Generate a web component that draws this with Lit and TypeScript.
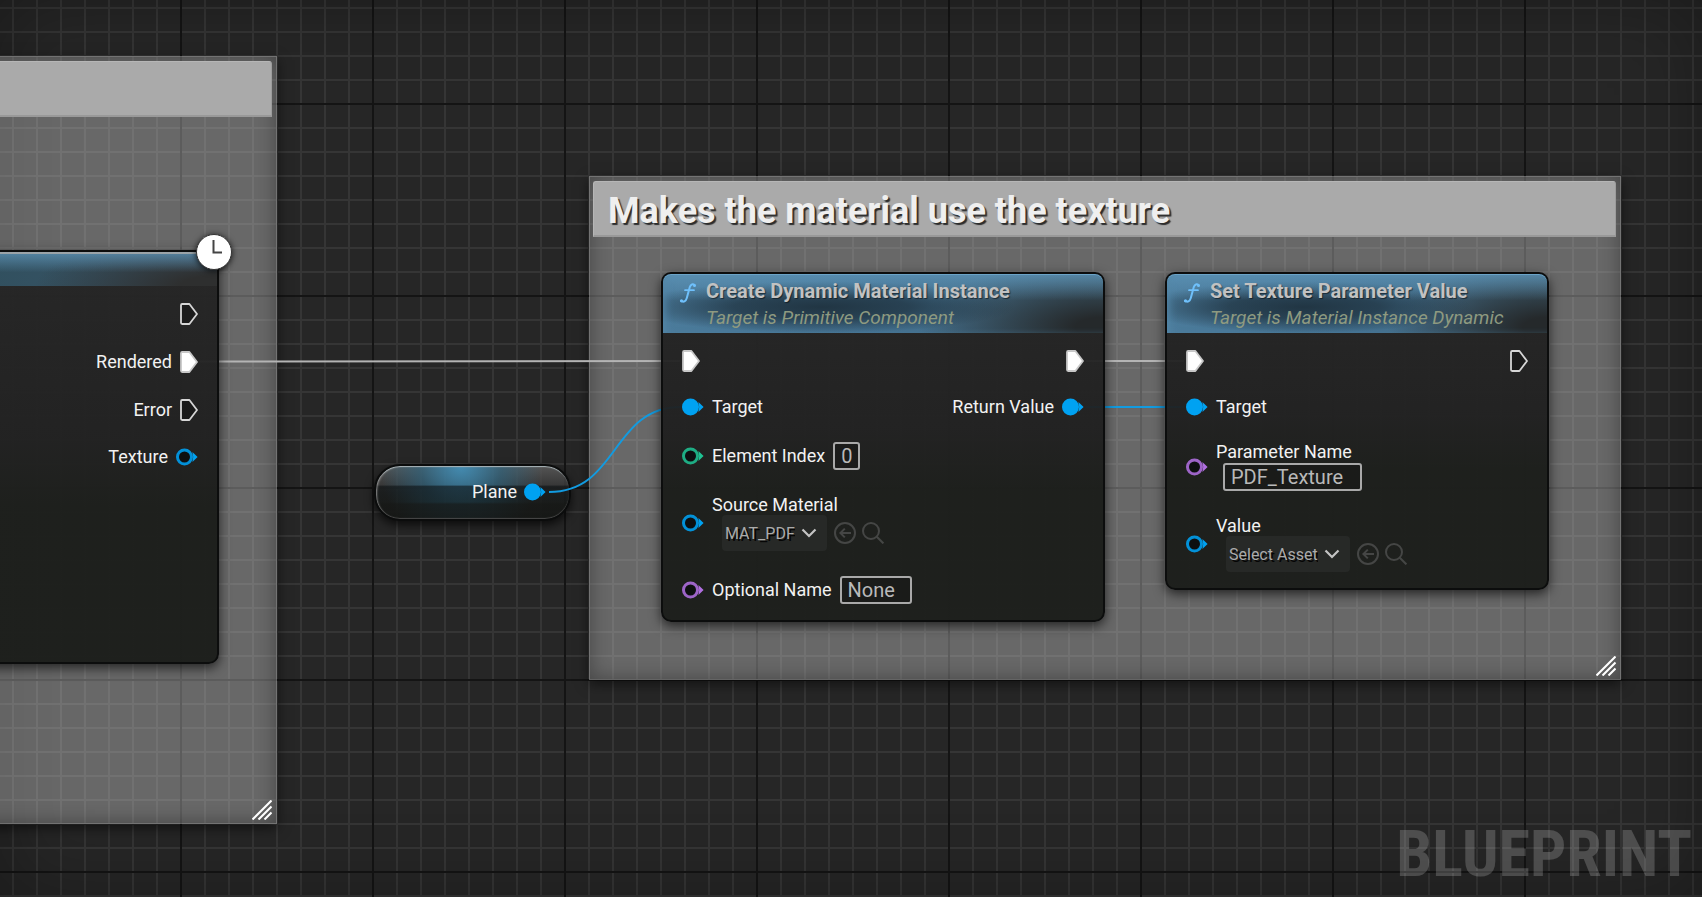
import { LitElement, html, css, svg } from "lit";
import { customElement, property } from "lit/decorators.js";

const BLUE = "#00a2f2";
const GREEN = "#1fc293";
const PURPLE = "#b06fe0";

const execPin = (filled: boolean) => html`<svg class="pin" width="18" height="22" viewBox="0 0 18 22" aria-hidden="true">
  <path d="M1 2.2Q1 1 2.2 1H9.4L17 11L9.4 21H2.2Q1 21 1 19.8Z" fill=${filled ? "#fff" : "rgba(10,10,10,.35)"}
    stroke=${filled ? "#c8c8c8" : "#d6d6d6"} stroke-width="1.8" stroke-linejoin="round"/>
</svg>`;

const dataPin = (color: string, filled = false) => html`<svg class="pin" width="22" height="18" viewBox="0 0 22 18" aria-hidden="true">
  <path d="M16.4 4Q18 9 16.4 14L21.6 9Z" fill=${color}/>
  <circle cx="8.5" cy="9" r="7" fill=${filled ? color : "#0d0f10"} stroke=${color} stroke-width="3" stroke-opacity=${filled ? 1 : 0.88}/>
</svg>`;

const chevron = html`<svg class="chevron" width="16" height="10" viewBox="0 0 16 10" aria-hidden="true">
  <path d="M1.5 1.5L8 8L14.5 1.5" fill="none" stroke="#c4c4c4" stroke-width="2.2"/>
</svg>`;

const grip = html`<svg class="grip" width="20" height="20" viewBox="0 0 20 20" aria-hidden="true">
  <path d="M0.5 19.5L19.5 0.5M6.5 19.5L19.5 6.5M12.5 19.5L19.5 12.5" stroke="#fff" stroke-width="2.1"/>
</svg>`;

const fnIcon = html`<svg class="fn" width="18" height="22" viewBox="0 0 18 22" aria-hidden="true">
  <g fill="none" stroke="#6fc0fb" stroke-width="2" stroke-linecap="round">
    <path d="M15.6 3.2C14 1.6 11.6 2.2 10.8 5L7.8 16C6.9 19.4 4.4 20.4 2.2 19"/>
    <path d="M6 8.2H15" stroke-width="1.7"/>
  </g>
  <circle cx="15.5" cy="3.4" r="1.5" fill="#6fc0fb"/><circle cx="2.5" cy="18.8" r="1.6" fill="#6fc0fb"/>
</svg>`;

const shared = css`
  * { box-sizing: border-box; }
  .pin, .chevron, .fn, .grip { display: block; flex: none; }
  select, input, button { font-family: inherit; margin: 0; }
  select { appearance: none; outline: none; }
  .combo { display: inline-grid; align-items: center; }
  .combo > * { grid-area: 1 / 1; }
  .combo > .chevron { justify-self: end; margin-right: 10px; pointer-events: none; }
`;

@customElement("comment-box")
class CommentBox extends LitElement {
  @property() heading = "";
  static styles = [shared, css`
    :host {
      display: flex; flex-direction: column; box-sizing: border-box;
      padding: 4px 4px 3px 3px;
      background: rgba(232, 232, 232, .34);
      border: 1px solid rgba(120, 120, 120, .3);
      box-shadow: inset 0 0 20px rgba(0, 0, 0, .34), 0 4px 12px rgba(0, 0, 0, .55);
    }
    h2 {
      margin: 0; height: 56px; padding: 2px 14px 0; background: #aaa;
      border: 1px solid #b6b6b6; border-bottom: 2px solid #999; border-right-color: #9c9c9c; border-radius: 3px 3px 0 0;
      font-size: 36px; line-height: 54px; font-weight: 700; color: #efefef;
      text-shadow: 2px 2px 1px #2c2c2c; white-space: nowrap;
    }
    .grip { margin: auto 0 0 auto; }
  `];
  render() {
    return html`<h2>${this.heading}</h2>${grip}`;
  }
}

@customElement("asset-picker")
class AssetPicker extends LitElement {
  @property() label = "";
  @property() value = "";
  static styles = [shared, css`
    :host { display: flex; flex-direction: column; align-items: flex-start; }
    label { line-height: 20px; }
    .tools { display: flex; align-items: center; margin-left: 10px; }
    select {
      height: 36px; padding: 0 32px 0 3px; border: 0; border-radius: 4px; background: #272927;
      color: #ababab; font-size: 16px; text-shadow: 2px 2px 0 #050505;
    }
    button { display: block; padding: 0; border: 0; background: none; width: 22px; height: 22px; margin-left: 6px; }
    .combo { margin-right: 1px; }
  `];
  render() {
    return html`
      <label for="asset">${this.label}</label>
      <div class="tools">
        <span class="combo"><select id="asset"><option>${this.value}</option></select>${chevron}</span>
        <button aria-label="Use selected asset">
          <svg width="22" height="22" viewBox="0 0 22 22" fill="none" stroke="#454645" stroke-width="2">
            <circle cx="11" cy="11" r="10"/><path d="M17 11H6.5M10.8 6.6L6.4 11L10.8 15.4"/>
          </svg>
        </button>
        <button aria-label="Browse to asset">
          <svg width="22" height="22" viewBox="0 0 22 22" fill="none" stroke="#454645" stroke-width="2">
            <circle cx="9" cy="9" r="8"/><path d="M14.8 14.8L21.4 21.4"/>
          </svg>
        </button>
      </div>`;
  }
}

@customElement("graph-node")
class GraphNode extends LitElement {
  @property() heading = "";
  @property() subtitle = "";
  static styles = [shared, css`
    :host {
      display: block; box-sizing: border-box; border: 2px solid #0c0d0d; border-radius: 10px;
      background: linear-gradient(rgba(36, 36, 36, .95), rgba(31, 31, 31, .95) 45%, rgba(27, 29, 26, .96) 62%);
      box-shadow: 0 4px 12px rgba(0, 0, 0, .65);
    }
    header {
      display: flex; gap: 9px; height: 59px; padding: 6px 16px 0 16px; border-radius: 8px 8px 0 0;
      background:
        linear-gradient(rgba(96, 152, 188, .7), rgba(80, 130, 160, 0) 45%),
        radial-gradient(ellipse 44% 44% at 36% 56%, rgba(31, 50, 63, .95), rgba(31, 50, 63, .75) 45%, rgba(31, 50, 63, 0)),
        radial-gradient(ellipse 42% 110% at 100% 90%, #25292b 15%, rgba(37, 41, 43, 0)),
        linear-gradient(90deg, #4b7b9b, #43708f 50%, #44687e);
      box-shadow: inset 0 1px 0 #6ba4c8, inset 6px 0 8px -4px #5487a8;
    }
    h3 { margin: 0; font-size: 20px; line-height: 22px; font-weight: 700; color: #c2c2c2; text-shadow: 1px 1px 1px rgba(0, 0, 0, .5); white-space: nowrap; }
    p { margin: 5px 0 0; font-size: 19px; line-height: 22px; font-style: italic; color: #8e9a80; white-space: nowrap; }
    .fn { margin-top: 2px; }
    .plain {
      height: 34px;
      background:
        linear-gradient(rgba(96, 152, 188, .75), rgba(80, 130, 160, 0) 60%),
        radial-gradient(ellipse 40% 150% at 100% 100%, #2e2f2f 20%, rgba(46, 47, 47, 0)),
        linear-gradient(90deg, #31505f, #31505f 50%, #3c5568);
      box-shadow: inset 0 2px 0 #9aa3a8;
      border-radius: 6px 6px 0 0;
    }
    .body { display: flex; justify-content: space-between; padding: 17px 19px 16px; }
  `];
  render() {
    return html`
      ${this.heading
        ? html`<header>${fnIcon}<div><h3>${this.heading}</h3><p>${this.subtitle}</p></div></header>`
        : html`<header class="plain"></header>`}
      <div class="body"><slot name="in"></slot><slot name="out"></slot></div>`;
  }
}

@customElement("app-root")
class AppRoot extends LitElement {
  static styles = [shared, css`
    :host {
      display: block; position: relative; overflow: hidden; height: 100vh; min-height: 840px;
      font-family: Roboto, "Liberation Sans", sans-serif; font-size: 18px; line-height: 20px; color: #f2f2f2;
      background-color: #262626;
      background-image:
        linear-gradient(90deg, #141414 2px, transparent 2px),
        linear-gradient(#141414 2px, transparent 2px),
        linear-gradient(90deg, #353535 2px, transparent 2px),
        linear-gradient(#353535 2px, transparent 2px);
      background-size: 192px 192px, 192px 192px, 24px 24px, 24px 24px;
      background-position: 180px 0, 0 103px, 12px 0, 0 7px;
    }
    .vignette { position: absolute; inset: 0; box-shadow: inset 0 0 80px rgba(0, 0, 0, .3); pointer-events: none; }
    .wires { position: absolute; left: 0; top: 0; width: 100%; height: 100%; pointer-events: none; }
    comment-box, graph-node, .variable, .latent, .watermark { position: absolute; }
    .comment-a { left: -400px; top: 56px; width: 677px; height: 768px; }
    .comment-b { left: 589px; top: 176px; width: 1032px; height: 504px; }
    .node-render { left: -240px; top: 250px; width: 459px; height: 414px; }
    .node-create { left: 661px; top: 272px; width: 444px; }
    .node-set { left: 1165px; top: 272px; width: 384px; }
    .latent { left: 195px; top: 233px; filter: drop-shadow(0 1px 3px rgba(0, 0, 0, .8)); }
    .column { display: flex; flex-direction: column; gap: 25px; }
    .out { align-items: flex-end; }
    .loose { gap: 26px; }
    .row { display: flex; align-items: center; gap: 8px; min-height: 20px; }
    .stack { display: flex; flex-direction: column; align-items: flex-start; gap: 1px; }
    .stack input { margin-left: 7px; }
    input {
      height: 28px; padding: 0 6px; border: 2px solid #a9a9a9; border-radius: 3px; background: rgba(20, 20, 20, .4);
      color: #b9b9b9; font-size: 20px; outline: none;
    }
    .digit { width: 27px; padding: 0; text-align: center; }
    .short { width: 72px; }
    .long { width: 139px; }
    .address { padding-top: 254px; }
    .address select { width: 150px; height: 41px; border: 2px solid #2e2f2e; border-radius: 5px; background: #0e0e0e; color: #c4c4c4; font-size: 18px; }
    .address .chevron { margin-right: 22px; }
    .variable {
      left: 374px; top: 464px; width: 197px; height: 57px; border-radius: 26px;
      display: flex; align-items: center; justify-content: flex-end; gap: 7px; padding: 0 23px 2px 0;
      border: 2px solid #0b0c0c;
      background:
        linear-gradient(transparent 36%, rgba(14, 18, 20, .6) 38%, rgba(14, 18, 16, .55) 68%, rgba(20, 22, 20, .8) 72%),
        radial-gradient(ellipse 42% 150% at 44% 0, rgba(66, 146, 188, .9), rgba(44, 104, 134, .6) 50%, transparent),
        linear-gradient(rgba(92, 92, 92, .85), rgba(48, 48, 48, .7) 50%, rgba(28, 28, 28, .7));
      box-shadow: inset 0 2px 1px -1px #a9b4b8, inset 2px 1px 2px -1px #8f8f8f, inset 0 -1px 1px #4a4a4a, 0 4px 10px rgba(0, 0, 0, .7);
    }
    .watermark { right: 10px; bottom: 10px; font-family: "Roboto Condensed", Roboto, sans-serif; font-size: 64px; line-height: 64px; font-weight: 700; color: rgba(255, 255, 255, .19); }
  `];

  render() {
    return html`
      <div class="vignette"></div>
      <comment-box class="comment-a"></comment-box>
      <comment-box class="comment-b" heading="Makes the material use the texture"></comment-box>
      <div class="variable"><span>Plane</span>${dataPin(BLUE, true)}</div>

      <svg class="wires" aria-hidden="true">
        <g fill="none" stroke-width="2">
          ${["M200 361.5L680 361", "M1086 361H1184"].map(d => svg`<path d=${d} stroke="#b4b4b4"/>`)}
          ${["M549 492C619 492 611 407 681 407", "M1086 407H1184"].map(d => svg`<path d=${d} stroke="#129be0"/>`)}
        </g>
      </svg>

      <graph-node class="node-render">
        <div slot="in" class="address">
          <span class="combo"><select aria-label="Option"><option></option></select>${chevron}</span>
        </div>
        <div slot="out" class="column out loose">
          <div class="row">${execPin(false)}</div>
          <div class="row"><span>Rendered</span>${execPin(true)}</div>
          <div class="row"><span>Error</span>${execPin(false)}</div>
          <div class="row"><span>Texture</span>${dataPin(BLUE)}</div>
        </div>
      </graph-node>

      <svg class="latent" width="38" height="38" viewBox="0 0 38 38" aria-hidden="true">
        <circle cx="19" cy="19" r="17.5" fill="#fff" stroke="#333" stroke-width="1"/>
        <path d="M18.5 7V19.5H27" fill="none" stroke="#444" stroke-width="2"/>
      </svg>

      <graph-node class="node-create" heading="Create Dynamic Material Instance" subtitle="Target is Primitive Component">
        <div slot="in" class="column">
          <div class="row">${execPin(true)}</div>
          <div class="row">${dataPin(BLUE, true)}<span>Target</span></div>
          <div class="row">${dataPin(GREEN)}<label for="index">Element Index</label><input id="index" class="digit" value="0" /></div>
          <div class="row">${dataPin(BLUE)}<asset-picker label="Source Material" value="MAT_PDF"></asset-picker></div>
          <div class="row">${dataPin(PURPLE)}<label for="name">Optional Name</label><input id="name" class="short" value="None" /></div>
        </div>
        <div slot="out" class="column out">
          <div class="row">${execPin(true)}</div>
          <div class="row"><span>Return Value</span>${dataPin(BLUE, true)}</div>
        </div>
      </graph-node>

      <graph-node class="node-set" heading="Set Texture Parameter Value" subtitle="Target is Material Instance Dynamic">
        <div slot="in" class="column">
          <div class="row">${execPin(true)}</div>
          <div class="row">${dataPin(BLUE, true)}<span>Target</span></div>
          <div class="row">${dataPin(PURPLE)}
            <div class="stack"><label for="param">Parameter Name</label><input id="param" class="long" value="PDF_Texture" /></div>
          </div>
          <div class="row">${dataPin(BLUE)}<asset-picker label="Value" value="Select Asset"></asset-picker></div>
        </div>
        <div slot="out" class="column out">
          <div class="row">${execPin(false)}</div>
        </div>
      </graph-node>

      <div class="watermark">BLUEPRINT</div>
    `;
  }
}
